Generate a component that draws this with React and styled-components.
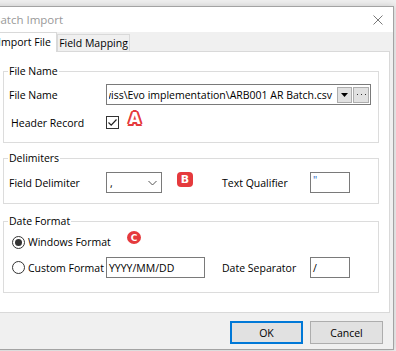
import styled, { createGlobalStyle } from "styled-components";

const GlobalStyle = createGlobalStyle`
  * { box-sizing: border-box; }
  html, body {
    margin: 0;
    padding: 0;
    background: #f0f0f0;
    overflow: hidden;
  }
  body {
    font-family: "Open Sans", "Noto Sans", sans-serif;
    font-size: 10.5px;
    color: #000;
  }
`;

const Screen = styled.div`
  width: 396px;
  height: 351px;
  overflow: hidden;
  padding-top: 6px;
`;

const Window = styled.div`
  margin-left: -12px;
  width: 406px;
  height: 344px;
  border: 1px solid #a3a3a3;
  background: #f0f0f0;
  box-shadow: 0 0 7px rgba(0, 0, 0, 0.18);
  display: flex;
  flex-direction: column;
`;

const TitleBar = styled.div`
  height: 25px;
  flex: none;
  background: #fff;
  display: flex;
  align-items: center;
  padding: 0 10px 0 4px;
`;

const Title = styled.div`
  flex: 1;
  font-size: 11.5px;
  color: #999;
`;

const Client = styled.div`
  flex: 1;
  display: flex;
  flex-direction: column;
  padding: 0 3px;
`;

const TabStrip = styled.div`
  height: 19px;
  flex: none;
  display: flex;
  align-items: flex-end;
`;

const Tab = styled.div`
  height: ${(p) => (p.$active ? "20px" : "17px")};
  width: ${(p) => p.$w}px;
  margin-bottom: ${(p) => (p.$active ? "-1px" : "0")};
  position: relative;
  z-index: ${(p) => (p.$active ? 1 : 0)};
  background: ${(p) => (p.$active ? "#fff" : "#f0f0f0")};
  border: 1px solid #d9d9d9;
  border-bottom: none;
  display: flex;
  align-items: center;
  justify-content: center;
  white-space: nowrap;
  padding-bottom: ${(p) => (p.$active ? "1px" : "0")};
`;

const Panel = styled.div`
  height: 262px;
  flex: none;
  background: #fff;
  border: 1px solid #d9d9d9;
  padding: 12px 10px 0 10px;
`;

const Group = styled.fieldset`
  margin: 0 0 ${(p) => p.$gap || 0}px;
  min-width: 0;
  border: 1px solid #dcdcdc;
  padding: ${(p) => p.$pad};
  display: flex;
  flex-direction: column;
  gap: ${(p) => p.$rowGap || 0}px;
`;

const Legend = styled.legend`
  margin-left: 4px;
  padding: 0 1px;
  line-height: 14px;
`;

const Row = styled.div`
  display: grid;
  grid-template-columns: ${(p) => p.$cols};
  align-items: center;
  height: ${(p) => p.$h || 21}px;
`;

const Label = styled.div`
  padding-left: ${(p) => p.$indent ?? 5}px;
  white-space: nowrap;
`;

const Cell = styled.div`
  display: flex;
  align-items: center;
  height: 100%;
`;

const Combo = styled.div`
  height: 21px;
  min-width: 0;
  border: 1px solid #7a7a7a;
  background: #fff;
  display: flex;
  align-items: center;
  padding: 2px 1px 2px 2px;
  gap: 1px;
  overflow: hidden;
`;

const PathText = styled.div`
  flex: 1;
  min-width: 0;
  overflow: hidden;
  display: flex;
  justify-content: flex-end;
  white-space: nowrap;
  padding-right: 4px;
`;

const SmallButton = styled.div`
  width: ${(p) => p.$w}px;
  height: 16px;
  flex: none;
  background: #e1e1e1;
  border: 1px solid #adadad;
  display: flex;
  align-items: center;
  justify-content: center;
`;

const TextBox = styled.div`
  width: ${(p) => p.$w}px;
  height: 21px;
  border: 1px solid #7a7a7a;
  background: #fff;
  display: flex;
  align-items: ${(p) => (p.$top ? "flex-start" : "center")};
  padding: 0 2px;
  color: ${(p) => p.$color || "#000"};
  white-space: nowrap;
`;

const DropValue = styled.div`
  flex: 1;
  padding-left: 1px;
`;

const CheckBox = styled.div`
  width: 13px;
  height: 13px;
  flex: none;
  border: 1px solid #333;
  background: #fff;
  display: flex;
  align-items: center;
  justify-content: center;
`;

const Radio = styled.div`
  width: 13px;
  height: 13px;
  flex: none;
  border-radius: 50%;
  border: 1px solid #333;
  background: #fff;
  display: flex;
  align-items: center;
  justify-content: center;
  margin-right: 3px;
  &::after {
    content: "";
    width: 7px;
    height: 7px;
    border-radius: 50%;
    background: ${(p) => (p.$checked ? "#333" : "transparent")};
  }
`;

const RadioLabel = styled.div`
  display: flex;
  align-items: center;
  padding-left: 8px;
  white-space: nowrap;
`;

const OutlineMark = styled.div`
  margin-left: 10px;
  margin-top: -7px;
  font-family: "DejaVu Sans", sans-serif;
  font-weight: bold;
  font-size: 15px;
  line-height: 16px;
  color: #fff;
  text-shadow: 2px 0 0 #e53a3d, -2px 0 0 #e53a3d, 0 2px 0 #e53a3d,
    0 -2px 0 #e53a3d, 1.5px 1.5px 0 #e53a3d, -1.5px -1.5px 0 #e53a3d,
    1.5px -1.5px 0 #e53a3d, -1.5px 1.5px 0 #e53a3d, 1px 0 0 #e53a3d,
    -1px 0 0 #e53a3d;
`;

const BadgeMark = styled.div`
  width: ${(p) => p.$w}px;
  height: ${(p) => p.$h}px;
  margin-left: ${(p) => p.$ml}px;
  margin-top: ${(p) => p.$mt}px;
  border-radius: ${(p) => p.$r};
  background: #e53a3d;
  color: #fff;
  font-family: "DejaVu Sans", sans-serif;
  font-weight: bold;
  font-size: ${(p) => p.$fs}px;
  display: flex;
  align-items: center;
  justify-content: center;
`;

const Footer = styled.div`
  flex: 1;
  display: flex;
  justify-content: flex-end;
  align-items: flex-start;
  gap: 7px;
  padding: 8px 7px 0 0;
`;

const Button = styled.div`
  width: 73px;
  height: 23px;
  background: #e1e1e1;
  border: ${(p) => (p.$default ? "2px solid #0078d7" : "1px solid #adadad")};
  display: flex;
  align-items: center;
  justify-content: center;
`;

const CloseIcon = () => (
  <svg width="10" height="10" viewBox="0 0 10 10">
    <path d="M0.5 0.5 L9.5 9.5 M9.5 0.5 L0.5 9.5" stroke="#7a7a7a" strokeWidth="1" />
  </svg>
);

const cols4 = "102px 116px 88px 40px";
const cols2 = "102px minmax(0, 1fr)";

const App = () => {
  return (
    <Screen>
      <GlobalStyle />
      <Window>
        <TitleBar>
          <Title>Batch Import</Title>
          <CloseIcon />
        </TitleBar>
        <Client>
          <TabStrip>
            <Tab $active $w={65}>Import File</Tab>
            <Tab $w={73}>Field Mapping</Tab>
          </TabStrip>
          <Panel>
            <Group $gap={8} $pad="6px 7px 9px 0" $rowGap={7}>
              <Legend>File Name</Legend>
              <Row $cols={cols2}>
                <Label>File Name</Label>
                <Combo>
                  <PathText>
                    C:\Users\Public\Documents\Swiss\Evo implementation\ARB001 AR Batch.csv
                  </PathText>
                  <SmallButton $w={15}>
                    <svg width="7" height="4" viewBox="0 0 7 4">
                      <path d="M0 0 H7 L3.5 4 Z" fill="#000" />
                    </svg>
                  </SmallButton>
                  <SmallButton $w={16}>
                    <svg width="9" height="2" viewBox="0 0 9 2">
                      <rect x="0" y="0" width="1" height="1" fill="#333" />
                      <rect x="4" y="0" width="1" height="1" fill="#333" />
                      <rect x="8" y="0" width="1" height="1" fill="#333" />
                    </svg>
                  </SmallButton>
                </Combo>
              </Row>
              <Row $cols={cols2}>
                <Label $indent={7}>Header Record</Label>
                <Cell>
                  <CheckBox>
                    <svg width="11" height="11" viewBox="0 0 11 11">
                      <path d="M1.5 5.5 L4.2 8.2 L9.5 2.5" fill="none" stroke="#222" strokeWidth="1.2" />
                    </svg>
                  </CheckBox>
                  <OutlineMark>A</OutlineMark>
                </Cell>
              </Row>
            </Group>

            <Group $gap={10} $pad="7px 0 10px 0">
              <Legend>Delimiters</Legend>
              <Row $cols={cols4}>
                <Label>Field Delimiter</Label>
                <Cell>
                  <TextBox $w={56}>
                    <DropValue>,</DropValue>
                    <svg width="9" height="6" viewBox="0 0 9 6" style={{ marginRight: 2 }}>
                      <path d="M0.5 1 L4.5 5 L8.5 1" fill="none" stroke="#555" strokeWidth="1" />
                    </svg>
                  </TextBox>
                  <BadgeMark $w={16} $h={15} $ml={15} $mt={-7} $r="4px" $fs={11}>
                    B
                  </BadgeMark>
                </Cell>
                <Label $indent={0}>Text Qualifier</Label>
                <TextBox $w={40} $top $color="#1f5fbf">
                  "
                </TextBox>
              </Row>
            </Group>

            <Group $pad="4px 0 14px 0" $rowGap={5}>
              <Legend>Date Format</Legend>
              <Row $cols={cols4} $h={20}>
                <RadioLabel>
                  <Radio $checked />
                  Windows Format
                </RadioLabel>
                <Cell>
                  <BadgeMark $w={14} $h={13} $ml={21} $mt={-9} $r="50%" $fs={9}>
                    C
                  </BadgeMark>
                </Cell>
              </Row>
              <Row $cols={cols4}>
                <RadioLabel>
                  <Radio />
                  Custom Format
                </RadioLabel>
                <TextBox $w={99}>YYYY/MM/DD</TextBox>
                <Label $indent={0}>Date Separator</Label>
                <TextBox $w={40}>/</TextBox>
              </Row>
            </Group>
          </Panel>
          <Footer>
            <Button $default>OK</Button>
            <Button>Cancel</Button>
          </Footer>
        </Client>
      </Window>
    </Screen>
  );
};

export default App;
